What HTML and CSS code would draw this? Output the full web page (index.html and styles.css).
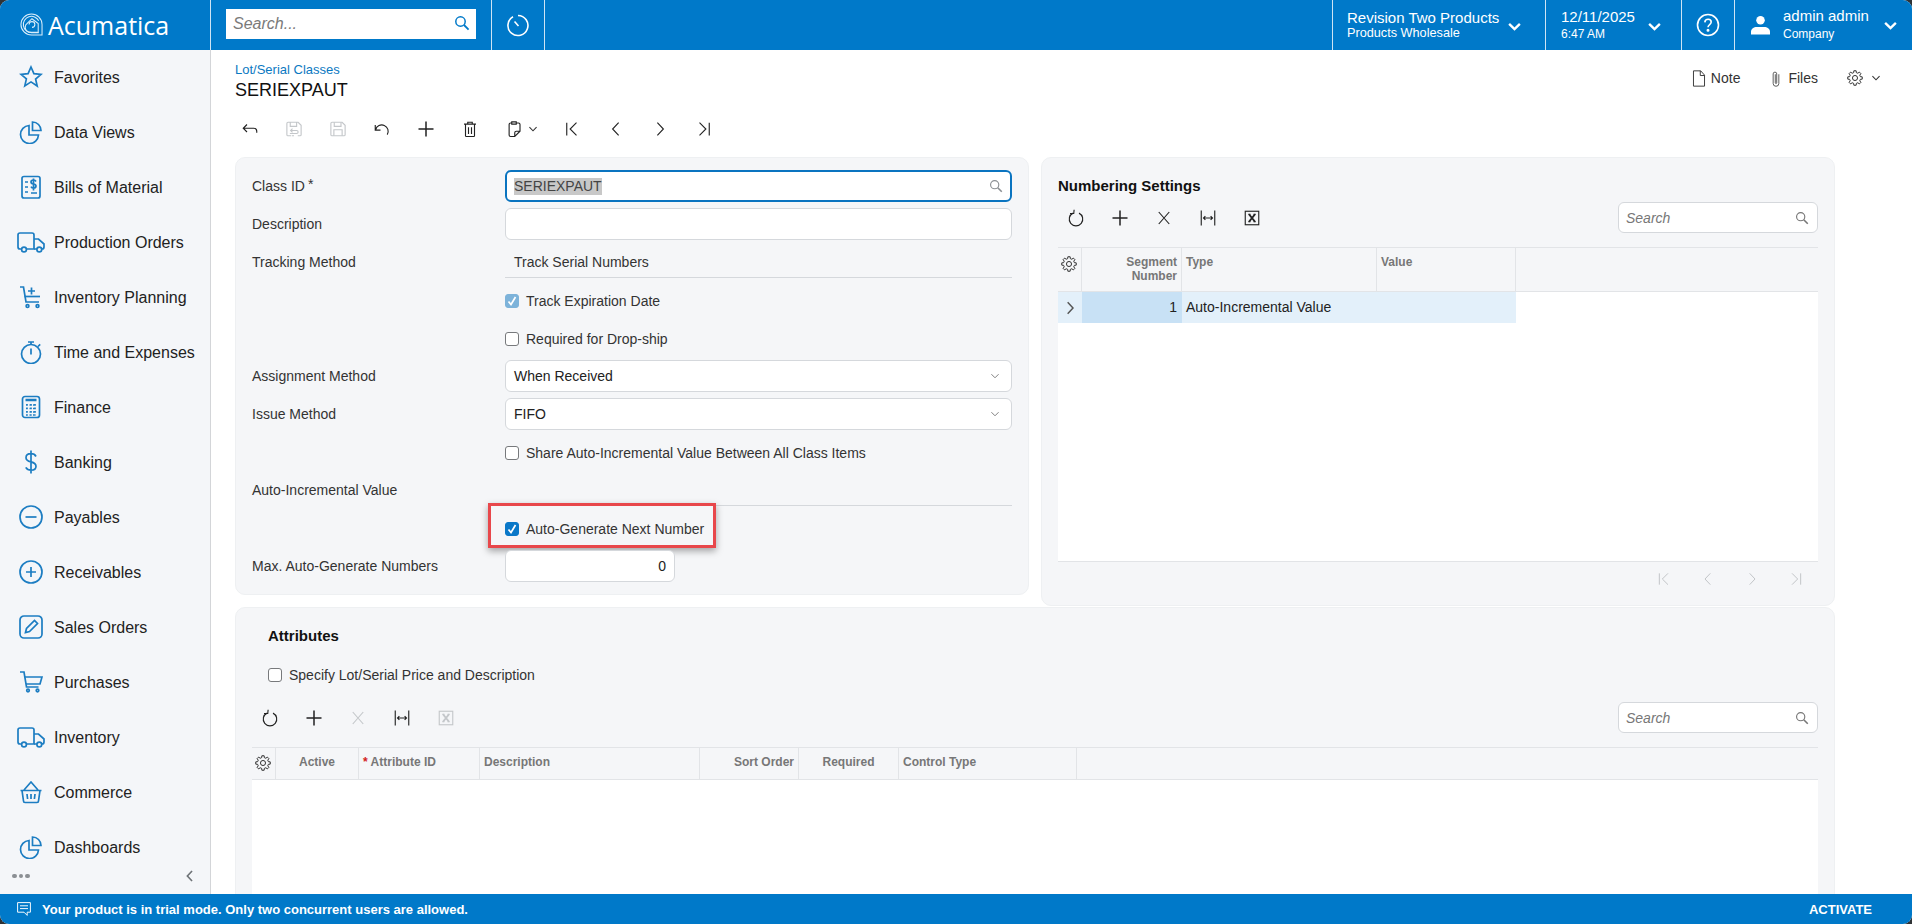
FILE: index.html
```html
<!DOCTYPE html>
<html lang="en">
<head>
<meta charset="utf-8">
<title>Lot/Serial Classes - SERIEXPAUT</title>
<link rel="stylesheet" href="styles.css">
</head>
<body>
<svg class="defs" width="0" height="0" aria-hidden="true">
  <symbol id="i-search" viewBox="0 0 16 16"><circle cx="6.5" cy="6.5" r="4.7"/><path d="M10 10l4.6 4.6" stroke-width="1.8"/></symbol>
  <symbol id="i-chev" viewBox="0 0 14 14"><path d="M2 4.5L7 9.5L12 4.5"/></symbol>
  <symbol id="i-star" viewBox="0 0 24 24"><path d="M12 2l2.9 6.6 7.1.7-5.4 4.7 1.6 7L12 16.9 5.8 20.9l1.6-7L2 9.3l7.1-.7z"/></symbol>
  <symbol id="i-pie" viewBox="0 0 24 24"><path d="M10 5.5a9 9 0 1 0 9.5 9.5H10z"/><path d="M13.500 2a8.500 8.500 0 0 1 8.500 8.500h-8.500z"/></symbol>
  <symbol id="i-bill" viewBox="0 0 24 24"><rect x="3" y="1.500" width="18" height="21.500" rx="2"/><path d="M6 7h3M6 12h3M6 17h3M12 18h6"/><path d="M17 6.500c-.5-1-1.400-1.500-2.500-1.500-1.400 0-2.500.8-2.500 2s1.100 1.800 2.500 2 2.500.9 2.500 2.100-1.100 2-2.500 2c-1.100 0-2-.5-2.500-1.500M14.500 3.500v12"/></symbol>
  <symbol id="i-truck" viewBox="0 0 28 24"><path d="M5 19H3a2 2 0 0 1-2-2V5a2 2 0 0 1 2-2h12a2 2 0 0 1 2 2v14H9"/><path d="M17 9h4.500L27 14v3a2 2 0 0 1-2 2h-.5M20 19h-3"/><circle cx="7" cy="19.500" r="2.400"/><circle cx="22.300" cy="19.500" r="2.400"/></symbol>
  <symbol id="i-cartplus" viewBox="0 0 24 24"><path d="M1 2h3.500l2.500 15h13"/><path d="M5.500 11.500H21"/><path d="M12.500 2.500v7M9 6h7" /><circle cx="8.500" cy="21" r="1.400"/><circle cx="18.500" cy="21" r="1.400"/></symbol>
  <symbol id="i-watch" viewBox="0 0 24 24"><circle cx="12" cy="14" r="9.500"/><path d="M12 8.500v6M9 2h6M12 2v2.500M19 6.500l2.200-2.200"/></symbol>
  <symbol id="i-calc" viewBox="0 0 24 24"><rect x="3.500" y="1.500" width="17" height="21" rx="2.500"/><path d="M6.500 5h11" stroke-width="2.500"/><path d="M7 10h10M7 13.500h10M7 17h10M7 20h10M8 9v11.500M12 9v11.500M16 9v11.500" stroke-dasharray="1.800 1.700"/></symbol>
  <symbol id="i-dollar" viewBox="0 0 24 24"><path d="M17 6.500C16 4.500 14.200 3.700 12 3.700c-3 0-5 1.600-5 4 0 2.500 2.300 3.500 5 4.200s5 1.800 5 4.300c0 2.400-2 4-5 4-2.300 0-4.200-1-5.200-2.800M12 .5v23"/></symbol>
  <symbol id="i-minus" viewBox="0 0 24 24"><circle cx="12" cy="12" r="11"/><path d="M6.500 12h11"/></symbol>
  <symbol id="i-plusc" viewBox="0 0 24 24"><circle cx="12" cy="12" r="11"/><path d="M7 12h10M12 7v10"/></symbol>
  <symbol id="i-edit" viewBox="0 0 24 24"><path d="M19 1H5a4 4 0 0 0-4 4v14a4 4 0 0 0 4 4h14a4 4 0 0 0 4-4V5a4 4 0 0 0-4-4z"/><path d="M6.500 17.500l1-4 8-8 3 3-8 8z"/></symbol>
  <symbol id="i-cart" viewBox="0 0 24 24"><path d="M1 2h4l2.500 15h12"/><path d="M5.500 7H23l-2 7H7"/><circle cx="9" cy="20.500" r="1.300"/><circle cx="18.500" cy="20.500" r="1.300"/></symbol>
  <symbol id="i-basket" viewBox="0 0 24 24"><path d="M1.500 10.500h21M3 10.500l1.500 10.500a1.500 1.500 0 0 0 1.500 1.500h12a1.500 1.500 0 0 0 1.500-1.500L21 10.500M5 10L12 2l7 8"/><path d="M8 14l.6 5M12 14v5M16 14l-.6 5"/></symbol>
  <symbol id="i-history" viewBox="0 0 24 24"><path d="M7 3.800a10 10 0 1 0 5-1.300"/><path d="M8.500 8.500L12.500 13"/></symbol>
  <symbol id="i-help" viewBox="0 0 24 24"><circle cx="12" cy="12" r="10.500"/><path d="M8.800 9.300c.2-2 1.500-3 3.300-3 1.800 0 3.100 1.100 3.100 2.700 0 2.600-3.200 2.500-3.200 5.300"/><circle cx="12" cy="17.300" r=".7"/></symbol>
  <symbol id="i-back" viewBox="0 0 24 24"><path d="M8 6L3 11l5 5M3 11h14a4 4 0 0 1 4 4v2"/></symbol>
  <symbol id="i-saveb" viewBox="0 0 24 24"><path d="M8 21H4a1.500 1.500 0 0 1-1.500-1.500v-15A1.500 1.500 0 0 1 4 3h13.500l4 4v12.500A1.500 1.500 0 0 1 20 21h-3M7 3v5.500h8.500V3M6.500 18h9a2 2 0 0 0 0-4H8M10 11.500L7.500 14l2.500 2.500M12 21H9"/></symbol>
  <symbol id="i-save" viewBox="0 0 24 24"><path d="M4 3h13.500l4 4v12.500A1.500 1.500 0 0 1 20 21H4a1.500 1.500 0 0 1-1.500-1.500v-15A1.500 1.500 0 0 1 4 3z"/><path d="M7 3v5.500h9V3M6.500 21v-8h11v8"/></symbol>
  <symbol id="i-undo" viewBox="0 0 24 24"><path d="M3 6.500v7h7M3.500 13a8.500 8.500 0 1 1 15.500 6.500"/></symbol>
  <symbol id="i-plus" viewBox="0 0 24 24"><path d="M12 2v20M2 12h20" stroke-width="2"/></symbol>
  <symbol id="i-trash" viewBox="0 0 24 24"><path d="M4 5.500h16M9 5.500V3h6v2.500M6 5.500V21a1 1 0 0 0 1 1h10a1 1 0 0 0 1-1V5.500M10 9.500v9M14 9.500v9"/></symbol>
  <symbol id="i-paste" viewBox="0 0 24 24"><path d="M9 4H7.500a2 2 0 0 0-2 2v14a2 2 0 0 0 2 2H13l7-7V6a2 2 0 0 0-2-2h-3M9 2.500h6v3H9zM13 22v-5a2 2 0 0 1 2-2h5"/></symbol>
  <symbol id="i-first" viewBox="0 0 24 24"><path d="M5 3.500v17M18 3.500L9.500 12l8.500 8.500"/></symbol>
  <symbol id="i-prev" viewBox="0 0 24 24"><path d="M15.500 3.500L7.500 12l8 8.500"/></symbol>
  <symbol id="i-next" viewBox="0 0 24 24"><path d="M8.500 3.500l8 8.500-8 8.500"/></symbol>
  <symbol id="i-last" viewBox="0 0 24 24"><path d="M19 3.500v17M6 3.500l8.500 8.500L6 20.500"/></symbol>
  <symbol id="i-refresh" viewBox="0 0 24 24"><path d="M8 5.500a9 9 0 1 0 8 0M9.500 1l-.5 5H4"/></symbol>
  <symbol id="i-x" viewBox="0 0 24 24"><path d="M5 4l14 16M19 4L5 20"/></symbol>
  <symbol id="i-fit" viewBox="0 0 24 24"><path d="M3 2v20M21 2v20M6 12h12M8.500 9.500L6 12l2.500 2.500M15.500 9.500L18 12l-2.500 2.500"/></symbol>
  <symbol id="i-excel" viewBox="0 0 24 24"><rect x="3" y="3" width="18" height="18"/><path d="M8 7l8 10M16 7L8 17" stroke-width="2.600"/><path d="M7 7h3M14 7h3M7 17h3M14 17h3"/></symbol>
  <symbol id="i-gear" viewBox="0 0 24 24"><circle cx="12" cy="12" r="3.800"/><polygon points="20.05,9.99 22.86,10.28 22.86,13.72 20.05,14.01 19.11,16.27 20.90,18.47 18.47,20.90 16.27,19.11 14.01,20.05 13.72,22.86 10.28,22.86 9.99,20.05 7.73,19.11 5.53,20.90 3.10,18.47 4.89,16.27 3.95,14.01 1.14,13.72 1.14,10.28 3.95,9.99 4.89,7.73 3.10,5.53 5.53,3.10 7.73,4.89 9.99,3.95 10.28,1.14 13.72,1.14 14.01,3.95 16.27,4.89 18.47,3.10 20.90,5.53 19.11,7.73"/></symbol>
  <symbol id="i-note" viewBox="0 0 16 20"><path d="M1.500 1h8.500l4.500 5v13h-13zM9.500 1v5.500h5"/></symbol>
  <symbol id="i-clip" viewBox="0 0 14 24"><path d="M11 6v13a4 4 0 0 1-8 0V5.500a2.500 2.500 0 0 1 5 0V18a1 1 0 0 1-2 0V6"/></symbol>
  <symbol id="i-msg" viewBox="0 0 20 20"><path d="M2 2h16v12h-4v4l-4-4H2zM5 6h10M5 9.500h10"/></symbol>
  <symbol id="i-logo" viewBox="0 0 24 24"><path d="M23 23H12A11 11 0 1 1 23 12z"/><path d="M19.500 20.500H12a8.500 8.500 0 1 1 7.500-12.500"/><path d="M6 12.500L12.500 6l6.500 5v9H9a5.500 5.500 0 0 1-3-7.500z"/><path d="M9.500 12a3 3 0 1 1 3 3"/></symbol>
</svg>

<div class="app">
  <header class="topbar">
    <div class="logo"><svg class="logo-mark"><use href="#i-logo"/></svg><span class="logo-text">Acumatica</span></div>
    <div class="top-search">
      <div class="top-search-box"><span>Search...</span><svg class="ico-16"><use href="#i-search"/></svg></div>
    </div>
    <div class="top-history"><svg class="ico-24"><use href="#i-history"/></svg></div>
    <div class="top-spacer"></div>
    <div class="top-item top-branch">
      <div class="top-lines"><span class="t-main">Revision Two Products</span><span class="t-sub">Products Wholesale</span></div>
      <svg class="top-chev"><use href="#i-chev"/></svg>
    </div>
    <div class="top-item top-date">
      <div class="top-lines"><span class="t-main">12/11/2025</span><span class="t-small">6:47 AM</span></div>
      <svg class="top-chev"><use href="#i-chev"/></svg>
    </div>
    <div class="top-item top-help"><svg class="ico-24"><use href="#i-help"/></svg></div>
    <div class="top-item top-user">
      <svg class="user-ico" viewBox="0 0 20 20"><circle cx="10" cy="5" r="4.500"/><path d="M0 20v-3c0-3 3-5 6-5h8c3 0 6 2 6 5v3z"/></svg>
      <div class="top-lines"><span class="t-main">admin admin</span><span class="t-small">Company</span></div>
      <svg class="top-chev"><use href="#i-chev"/></svg>
    </div>
  </header>

  <div class="body-row">
    <nav class="sidebar">
      <ul class="nav-list">
        <li class="nav-item"><span class="nav-ico"><svg><use href="#i-star"/></svg></span>Favorites</li>
        <li class="nav-item"><span class="nav-ico"><svg><use href="#i-pie"/></svg></span>Data Views</li>
        <li class="nav-item"><span class="nav-ico"><svg><use href="#i-bill"/></svg></span>Bills of Material</li>
        <li class="nav-item"><span class="nav-ico"><svg class="wide"><use href="#i-truck"/></svg></span>Production Orders</li>
        <li class="nav-item"><span class="nav-ico"><svg><use href="#i-cartplus"/></svg></span>Inventory Planning</li>
        <li class="nav-item"><span class="nav-ico"><svg><use href="#i-watch"/></svg></span>Time and Expenses</li>
        <li class="nav-item"><span class="nav-ico"><svg><use href="#i-calc"/></svg></span>Finance</li>
        <li class="nav-item"><span class="nav-ico"><svg><use href="#i-dollar"/></svg></span>Banking</li>
        <li class="nav-item"><span class="nav-ico"><svg><use href="#i-minus"/></svg></span>Payables</li>
        <li class="nav-item"><span class="nav-ico"><svg><use href="#i-plusc"/></svg></span>Receivables</li>
        <li class="nav-item"><span class="nav-ico"><svg><use href="#i-edit"/></svg></span>Sales Orders</li>
        <li class="nav-item"><span class="nav-ico"><svg><use href="#i-cart"/></svg></span>Purchases</li>
        <li class="nav-item"><span class="nav-ico"><svg class="wide"><use href="#i-truck"/></svg></span>Inventory</li>
        <li class="nav-item"><span class="nav-ico"><svg><use href="#i-basket"/></svg></span>Commerce</li>
        <li class="nav-item"><span class="nav-ico"><svg><use href="#i-pie"/></svg></span>Dashboards</li>
      </ul>
      <div class="side-foot">
        <span class="dots"><i></i><i></i><i></i></span>
        <svg class="side-collapse"><use href="#i-prev"/></svg>
      </div>
    </nav>

    <main class="content">
      <div class="page-head">
        <div>
          <div class="crumb">Lot/Serial Classes</div>
          <h1 class="page-title">SERIEXPAUT</h1>
        </div>
        <div class="head-actions">
          <span class="act"><svg class="ico-note"><use href="#i-note"/></svg>Note</span>
          <span class="act"><svg class="ico-note"><use href="#i-clip"/></svg>Files</span>
          <span class="act act-gear"><svg class="ico-gear"><use href="#i-gear"/></svg><svg class="ico-chev-sm"><use href="#i-chev"/></svg></span>
        </div>
      </div>

      <div class="toolbar main-tools">
        <span class="tool"><svg><use href="#i-back"/></svg></span>
        <span class="tool off-light"><svg><use href="#i-saveb"/></svg></span>
        <span class="tool off-light"><svg><use href="#i-save"/></svg></span>
        <span class="tool"><svg><use href="#i-undo"/></svg></span>
        <span class="tool"><svg><use href="#i-plus"/></svg></span>
        <span class="tool"><svg><use href="#i-trash"/></svg></span>
        <span class="tool tool-paste"><svg><use href="#i-paste"/></svg><svg class="ico-chev-sm"><use href="#i-chev"/></svg></span>
        <span class="tool"><svg><use href="#i-first"/></svg></span>
        <span class="tool"><svg><use href="#i-prev"/></svg></span>
        <span class="tool"><svg><use href="#i-next"/></svg></span>
        <span class="tool"><svg><use href="#i-last"/></svg></span>
      </div>

      <div class="panels">
        <section class="panel form-panel">
          <div class="label">Class ID<span class="req">*</span></div>
          <div class="input focused"><span class="selected">SERIEXPAUT</span><svg class="ico-14"><use href="#i-search"/></svg></div>

          <div class="label">Description</div>
          <div class="input"></div>

          <div class="label">Tracking Method</div>
          <div class="readonly">Track Serial Numbers</div>

          <div class="label"></div>
          <div class="check-row"><span class="cb cb-dis"><svg viewBox="0 0 14 14"><path d="M3.500 7.500L6 10.500L10.500 3"/></svg></span>Track Expiration Date</div>

          <div class="label"></div>
          <div class="check-row"><span class="cb"></span>Required for Drop-ship</div>

          <div class="label">Assignment Method</div>
          <div class="input">When Received<svg class="ico-select"><use href="#i-chev"/></svg></div>

          <div class="label">Issue Method</div>
          <div class="input">FIFO<svg class="ico-select"><use href="#i-chev"/></svg></div>

          <div class="label"></div>
          <div class="check-row"><span class="cb"></span>Share Auto-Incremental Value Between All Class Items</div>

          <div class="label">Auto-Incremental Value</div>
          <div class="rule-field"></div>

          <div class="label"></div>
          <div class="check-row highlight-host"><span class="cb cb-on"><svg viewBox="0 0 14 14"><path d="M3.500 7.500L6 10.500L10.500 3"/></svg></span>Auto-Generate Next Number<span class="highlight"></span></div>

          <div class="label">Max. Auto-Generate Numbers</div>
          <div class="input input-num">0</div>
        </section>

        <section class="panel num-panel">
          <h2 class="panel-title">Numbering Settings</h2>
          <div class="grid-bar">
            <div class="toolbar">
              <span class="tool"><svg><use href="#i-refresh"/></svg></span>
              <span class="tool"><svg><use href="#i-plus"/></svg></span>
              <span class="tool"><svg><use href="#i-x"/></svg></span>
              <span class="tool"><svg><use href="#i-fit"/></svg></span>
              <span class="tool"><svg><use href="#i-excel"/></svg></span>
            </div>
            <div class="grid-search"><span>Search</span><svg class="ico-14"><use href="#i-search"/></svg></div>
          </div>
          <div class="grid num-grid">
            <div class="grid-head">
              <div class="gh gh-gear"><svg class="ico-gear"><use href="#i-gear"/></svg></div>
              <div class="gh r w-seg">Segment<br>Number</div>
              <div class="gh w-type">Type</div>
              <div class="gh w-value">Value</div>
            </div>
            <div class="grid-row">
              <div class="gc gc-arrow"><svg><use href="#i-next"/></svg></div>
              <div class="gc gc-key w-seg">1</div>
              <div class="gc w-type2">Auto-Incremental Value</div>
              <div class="gc w-value"></div>
            </div>
          </div>
          <div class="pager">
            <svg><use href="#i-first"/></svg><svg><use href="#i-prev"/></svg><svg><use href="#i-next"/></svg><svg><use href="#i-last"/></svg>
          </div>
        </section>
      </div>

      <section class="panel attr-panel">
        <h2 class="panel-title attr-title">Attributes</h2>
        <div class="check-row attr-check"><span class="cb"></span>Specify Lot/Serial Price and Description</div>
        <div class="grid-bar">
          <div class="toolbar">
            <span class="tool"><svg><use href="#i-refresh"/></svg></span>
            <span class="tool"><svg><use href="#i-plus"/></svg></span>
            <span class="tool off-light"><svg><use href="#i-x"/></svg></span>
            <span class="tool"><svg><use href="#i-fit"/></svg></span>
            <span class="tool off-light"><svg><use href="#i-excel"/></svg></span>
          </div>
          <div class="grid-search"><span>Search</span><svg class="ico-14"><use href="#i-search"/></svg></div>
        </div>
        <div class="grid attr-grid">
          <div class="grid-head">
            <div class="gh gh-gear"><svg class="ico-gear"><use href="#i-gear"/></svg></div>
            <div class="gh c w-active">Active</div>
            <div class="gh w-attr"><span class="req-red">*</span> Attribute ID</div>
            <div class="gh w-desc">Description</div>
            <div class="gh r w-sort">Sort Order</div>
            <div class="gh c w-req">Required</div>
            <div class="gh w-ctrl">Control Type</div>
          </div>
        </div>
      </section>
    </main>
  </div>

  <footer class="trial">
    <svg class="trial-ico"><use href="#i-msg"/></svg>
    <span class="trial-msg">Your product is in trial mode. Only two concurrent users are allowed.</span>
    <span class="trial-btn">ACTIVATE</span>
  </footer>
</div>
</body>
</html>
```

FILE: styles.css
```css
* { box-sizing: border-box; }
html, body { margin: 0; height: 100%; background: #2f3336; overflow: hidden; }
body { font-family: "Liberation Sans", Arial, sans-serif; font-size: 14px; color: #222; }
.defs { position: absolute; }
svg { fill: none; stroke: currentColor; stroke-width: 1.4; display: block; flex: none; }
symbol { overflow: visible; }

.app { display: grid; grid-template-rows: 50px 844px 30px; height: 924px; width: 1912px; background: #fff; border-radius: 9px; overflow: hidden; }

/* top bar */
.topbar { display: flex; background: #0079c9; color: #fff; }
.logo { width: 211px; display: flex; align-items: center; padding-left: 20px; border-right: 1px solid #cfe4f4; }
.logo-mark { width: 23px; height: 23px; stroke-width: 1.1; color: #d9edfa; margin-top: -1px; }
.logo-text { font-family: "Open Sans", Lato, sans-serif; font-size: 25px; font-weight: 500; margin-left: 5px; }
.top-search { width: 281px; padding: 9px 15px 11px 15px; border-right: 1px solid #cfe4f4; }
.top-search-box { height: 30px; background: #fff; display: flex; align-items: center; justify-content: space-between; padding: 0 6px 0 7px; font-style: italic; font-size: 16px; color: #7a7a7a; }
.top-search-box svg { color: #0079c9; margin-top: -2px; }
.ico-16 { width: 16px; height: 16px; stroke-width: 1.5; }
.top-history { width: 53px; display: flex; align-items: center; justify-content: center; border-right: 1px solid #cfe4f4; }
.ico-24 { width: 24px; height: 24px; stroke-width: 1.6; }
.top-spacer { flex: 1; }
.top-item { display: flex; align-items: center; border-left: 1px solid #cfe4f4; }
.top-lines { display: flex; flex-direction: column; }
.t-main { font-size: 15px; line-height: 17px; }
.t-sub { font-size: 12.700px; line-height: 15px; }
.t-small { font-size: 12px; line-height: 15px; }
.top-chev { width: 15px; height: 15px; stroke-width: 2.200; margin-left: auto; }
.top-branch { width: 213px; padding: 0 23px 0 14px; }
.top-date { width: 136px; padding: 0 19px 0 15px; }
.top-date .top-lines { margin-top: -1px; }
.top-date .t-small { margin-top: 2px; }
.top-date .top-chev, .top-branch .top-chev { margin-top: 3px; }
.top-help { width: 53px; justify-content: center; }
.top-user { width: 178px; padding: 0 14px 0 16px; }
.top-user .top-lines { margin-left: 13px; margin-top: -2px; }
.top-user .t-small { margin-top: 3px; }
.user-ico { width: 19px; height: 20px; fill: #fff; stroke: none; }

/* body */
.body-row { display: flex; min-height: 0; }
.sidebar { width: 211px; flex: none; background: #f4f6f9; border-right: 1px solid #d3d5d8; display: flex; flex-direction: column; }
.nav-list { list-style: none; margin: 0; padding: 0; }
.nav-item { height: 55px; display: flex; align-items: center; font-size: 16px; color: #222; padding-left: 15px; }
.nav-ico { width: 32px; margin-right: 7px; display: flex; justify-content: center; color: #1c7dc2; margin-top: -1px; }
.nav-ico svg { width: 24px; height: 24px; stroke-width: 1.700; }
.nav-ico svg.wide { width: 28px; }
.side-foot { height: 36px; margin-top: -17px; display: flex; align-items: center; justify-content: space-between; padding: 0 13px 0 12px; }
.dots { display: flex; gap: 2px; }
.dots i { width: 4.500px; height: 4.500px; border-radius: 50%; background: #8b8f94; }
.side-collapse { width: 14px; height: 14px; color: #6e7377; stroke-width: 2.800; }

.content { flex: 1; min-width: 0; padding: 0 31px 0 24px; overflow: hidden; }
.page-head { display: flex; justify-content: space-between; padding-top: 12px; }
.crumb { font-size: 13px; line-height: 16px; color: #0b79c2; }
.page-title { margin: 0; font-size: 18px; line-height: 24px; font-weight: 400; color: #111; }
.head-actions { display: flex; height: 28px; margin-top: 2px; gap: 29px; align-items: center; font-size: 14px; color: #333; }
.act { display: flex; align-items: center; gap: 5px; }
.ico-note { width: 14px; height: 17px; stroke-width: 1.100; }
.act-gear { gap: 8px; }
.ico-gear { width: 16px; height: 16px; stroke-width: 1.500; color: #333; }
.ico-chev-sm { width: 10px; height: 10px; stroke-width: 1.500; color: #333; }

.toolbar { display: flex; align-items: center; margin-left: -4px; }
.main-tools { height: 32px; margin-top: 11px; margin-bottom: 12px; margin-left: -7px; }
.tool { width: 44px; height: 31px; display: flex; align-items: center; justify-content: center; color: #222; }
.tool svg { width: 18px; height: 18px; stroke-width: 1.500; }
.tool .ico-chev-sm { width: 10px; height: 10px; margin-left: 5px; }
.tool-paste { width: 58px; justify-content: flex-start; padding-left: 13px; }
.off-light { color: #c4c7ca; }

.panels { display: grid; grid-template-columns: 794px 794px; gap: 12px; width: 1600px; align-items: start; }
.panel { background: #f5f6f8; border: 1px solid #eef0f2; border-radius: 10px; }

/* form */
.form-panel { height: 438px; padding: 12px 16px 12px 16px; display: grid; grid-template-columns: 253px 507px; grid-auto-rows: 32px; row-gap: 6px; }
.label { display: flex; align-items: center; font-size: 14px; color: #333; }
.req { margin-left: 3px; align-self: flex-start; margin-top: 6px; }
.input { position: relative; height: 32px; background: #fff; border: 1px solid #d5d8dc; border-radius: 6px; display: flex; align-items: center; padding: 0 8px; font-size: 14px; color: #222; }
.focused { border: 2px solid #0a74c0; padding: 0 7px; }
.selected { background: #c8c8c8; color: #444; line-height: 17px; }
.ico-14 { width: 14px; height: 14px; margin-left: auto; color: #8b8f93; stroke-width: 1.300; }
.ico-select { width: 10px; height: 10px; margin-left: auto; color: #777; stroke-width: 1.300; margin-right: 3px; }
.input-num { width: 170px; justify-content: flex-end; padding-right: 8px; }
.readonly { display: flex; align-items: center; padding-left: 9px; border-bottom: 1px solid #d5d8dc; font-size: 14px; color: #333; }
.rule-field { border-bottom: 1px solid #d5d8dc; }
.check-row { display: flex; align-items: center; font-size: 14px; color: #333; padding-top: 2px; }
.cb { width: 14px; height: 14px; flex: none; margin-right: 7px; background: #fff; border: 1px solid #77797c; border-radius: 3px; display: flex; align-items: center; justify-content: center; }
.cb svg { width: 14px; height: 14px; stroke: #fff; stroke-width: 1.700; }
.cb-on { background: #0a78c8; border-color: #0a78c8; }
.cb-dis { background: #7db3da; border-color: #7db3da; }
.highlight-host { position: relative; }
.highlight { position: absolute; left: -17px; top: -9px; width: 228px; height: 45px; border: 3px solid #e8474b; box-shadow: 0 3px 7px rgba(0,0,0,.35); pointer-events: none; }

/* grids */
.num-panel { height: 449px; padding: 14px 16px 0 16px; display: flex; flex-direction: column; }
.panel-title { margin: 0 0 2px; height: 28px; line-height: 28px; font-size: 15px; font-weight: 700; color: #111; }
.grid-bar { display: flex; justify-content: space-between; align-items: center; height: 31px; margin-bottom: 14px; }
.grid-search { width: 200px; height: 31px; background: #fff; border: 1px solid #d5d8dc; border-radius: 6px; display: flex; align-items: center; padding: 0 7px; font-style: italic; font-size: 14px; color: #777; }
.grid-search svg { color: #777; margin-right: 1px; }
.grid { background: #fff; border-top: 1px solid #e2e4e7; }
.num-grid { height: 315px; border-bottom: 1px solid #e2e4e7; }
.grid-head { display: flex; background: #f5f6f8; border-bottom: 1px solid #e2e4e7; height: 44px; }
.attr-grid .grid-head { height: 32px; }
.gh { border-right: 1px solid #e2e4e7; font-size: 12px; line-height: 14px; font-weight: 700; color: #777; padding: 7px 4px 0; }
.gh.r { text-align: right; }
.gh.c { text-align: center; }
.gh-gear { width: 24px; padding: 8px 0 0 3px; }
.w-seg { width: 100px; }
.w-type { width: 195px; }
.w-value { width: 139px; }
.grid-row { display: flex; height: 31px; width: 458px; background: #e3f0fa; }
.gc { font-size: 14px; line-height: 30px; color: #222; }
.gc-arrow { width: 24px; display: flex; align-items: center; justify-content: center; color: #555; }
.gc-arrow svg { width: 16px; height: 18px; stroke-width: 2.200; }
.gc-key { background: #c8e1f5; text-align: right; padding-right: 5px; }
.w-type2 { width: 195px; padding-left: 4px; }
.pager { display: flex; justify-content: flex-end; align-items: center; height: 34px; color: #c2c5c8; padding-right: 14px; gap: 28px; }
.pager svg { width: 16px; height: 16px; stroke-width: 1.500; }

.attr-panel { width: 1600px; height: 300px; margin-top: 1px; padding: 14px 16px 0 16px; }
.attr-title { margin: 0 0 11px 16px; }
.attr-check { height: 28px; margin: 0 0 13px 16px; padding-top: 0; }
.attr-grid { height: 200px; }
.attr-grid .gh { padding-top: 7px; }
.w-active { width: 83px; }
.w-attr { width: 121px; padding-left: 4px; }
.req-red { color: #d32020; }
.w-desc { width: 220px; }
.w-sort { width: 99px; }
.w-req { width: 100px; }
.w-ctrl { width: 178px; }

/* trial bar */
.trial { display: flex; align-items: center; background: #0079c9; color: #fff; padding: 0 40px 0 16px; font-size: 13px; font-weight: 700; }
.trial-ico { width: 16px; height: 16px; stroke-width: 1.200; margin-right: 10px; }
.trial-btn { margin-left: auto; }
```
